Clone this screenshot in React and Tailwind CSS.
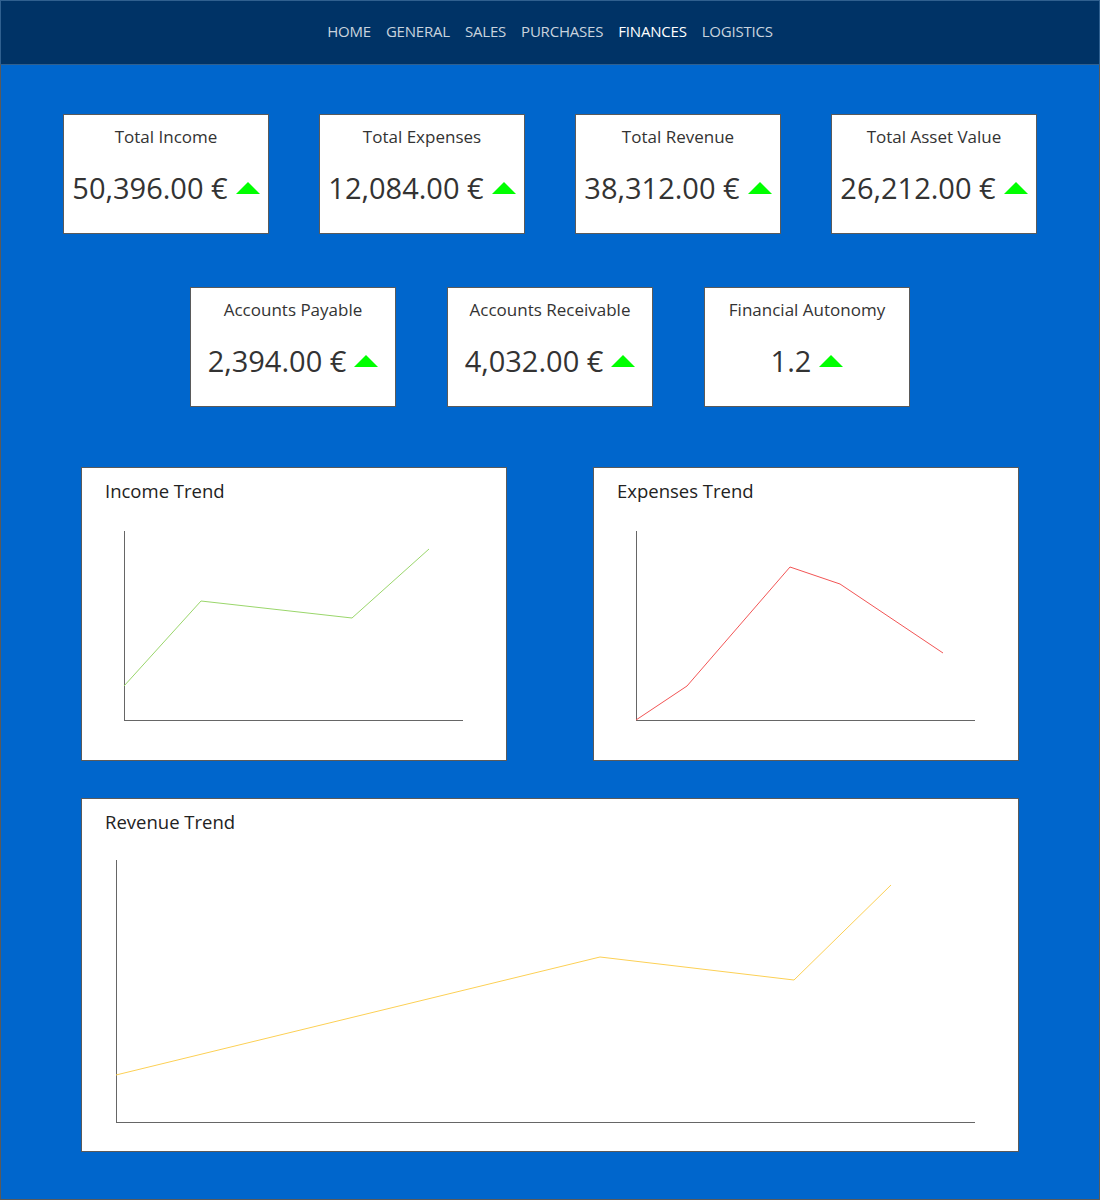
import React from 'react';

const NAV = ['HOME', 'GENERAL', 'SALES', 'PURCHASES', 'FINANCES', 'LOGISTICS'];

const TOP_KPIS = [
  { title: 'Total Income', value: '50,396.00 €' },
  { title: 'Total Expenses', value: '12,084.00 €' },
  { title: 'Total Revenue', value: '38,312.00 €' },
  { title: 'Total Asset Value', value: '26,212.00 €' },
];

const BOTTOM_KPIS = [
  { title: 'Accounts Payable', value: '2,394.00 €' },
  { title: 'Accounts Receivable', value: '4,032.00 €' },
  { title: 'Financial Autonomy', value: '1.2' },
];

// points are in the svg's own coordinates (origin = card inner left, under the title)
const CHARTS = {
  income: {
    title: 'Income Trend',
    color: '#9ad66b',
    axis: { x: 42, top: 27, bottom: 216, right: 381 },
    points: [[42, 182], [119, 97], [270, 114], [347, 45]],
    height: 255,
  },
  expenses: {
    title: 'Expenses Trend',
    color: '#f25555',
    axis: { x: 42, top: 27, bottom: 216, right: 381 },
    points: [[42, 216], [93, 182], [196, 63], [246, 80], [349, 149]],
    height: 255,
  },
  revenue: {
    title: 'Revenue Trend',
    color: '#fcd055',
    axis: { x: 34, top: 25, bottom: 287, right: 893 },
    points: [[34, 240], [518, 122], [712, 145], [809, 50]],
    height: 315,
  },
};

const UpArrow = () => (
  <svg width="24" height="12" viewBox="0 0 24 12" className="shrink-0">
    <polygon points="12,0 24,12 0,12" fill="#00ff00" />
  </svg>
);

const KpiCard = ({ title, value }) => (
  <div className="w-[206px] h-[120px] bg-white border border-[#5a5a5a] flex flex-col items-center pt-[10px]">
    <p className="text-[17px] leading-[24px] text-[#333]">{title}</p>
    <div className="mt-[19px] flex items-center gap-[8px]">
      <span className="text-[29px] leading-[40px] text-[#333] whitespace-nowrap">{value}</span>
      <UpArrow />
    </div>
  </div>
);

const TrendCard = ({ chart, className }) => {
  const { title, color, axis, points, height } = chart;
  return (
    <div className={`bg-white border border-[#5a5a5a] flex flex-col ${className}`}>
      <h4 className="px-[23px] pt-[10px] text-[18.5px] leading-[26px] text-[#222]">{title}</h4>
      <svg width="100%" height={height} className="block">
        <line x1={axis.x + 0.5} y1={axis.top} x2={axis.x + 0.5} y2={axis.bottom + 0.5} stroke="#666" strokeWidth="1" />
        <line x1={axis.x} y1={axis.bottom + 0.5} x2={axis.right} y2={axis.bottom + 0.5} stroke="#666" strokeWidth="1" />
        <polyline
          points={points.map((p) => p.join(',')).join(' ')}
          fill="none"
          stroke={color}
          strokeWidth="1"
        />
      </svg>
    </div>
  );
};

export default function App() {
  return (
    <div className="w-[1100px] h-[1200px] flex flex-col font-['Open_Sans','Noto_Sans',sans-serif]">
      <header className="h-[65px] shrink-0 bg-[#003366] border border-[#30608f] flex items-center justify-center pb-[3px]">
        <nav className="flex items-center gap-[15px] text-[15px] tracking-[-0.2px]">
          {NAV.map((item) => (
            <span key={item} className={item === 'FINANCES' ? 'text-white' : 'text-[#c9d3de]'}>
              {item}
            </span>
          ))}
        </nav>
      </header>

      <main className="flex-1 bg-[#0066cc] border-x border-b border-[#5a5a5a] flex flex-col items-center pt-[49px]">
        <div className="flex gap-[50px]">
          {TOP_KPIS.map((k) => (
            <KpiCard key={k.title} {...k} />
          ))}
        </div>

        <div className="flex gap-[51px] mt-[53px]">
          {BOTTOM_KPIS.map((k) => (
            <KpiCard key={k.title} {...k} />
          ))}
        </div>

        <div className="flex gap-[86px] mt-[60px]">
          <TrendCard chart={CHARTS.income} className="w-[426px] h-[294px]" />
          <TrendCard chart={CHARTS.expenses} className="w-[426px] h-[294px]" />
        </div>

        <TrendCard chart={CHARTS.revenue} className="w-[938px] h-[354px] mt-[37px]" />
      </main>
    </div>
  );
}
